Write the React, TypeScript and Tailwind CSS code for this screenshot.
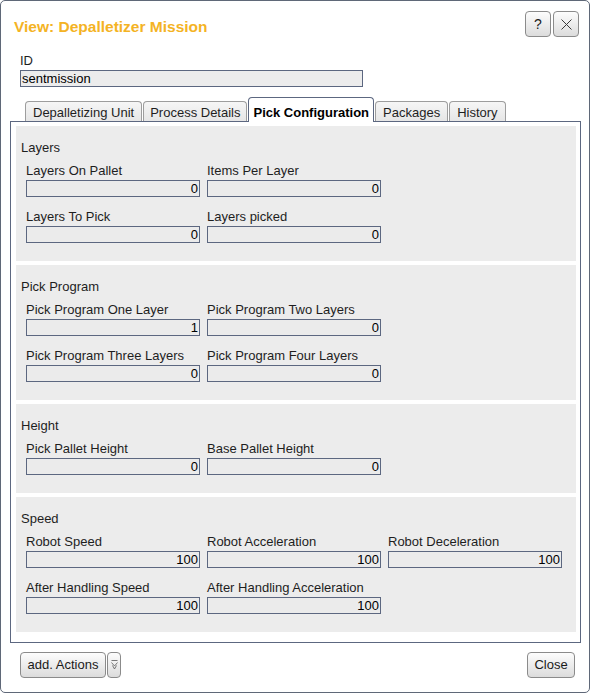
import React from 'react';

type Field = { label: string; value: string };
type Section = { title: string; rows: Field[][] };

const sections: Section[] = [
  {
    title: 'Layers',
    rows: [
      [
        { label: 'Layers On Pallet', value: '0' },
        { label: 'Items Per Layer', value: '0' },
      ],
      [
        { label: 'Layers To Pick', value: '0' },
        { label: 'Layers picked', value: '0' },
      ],
    ],
  },
  {
    title: 'Pick Program',
    rows: [
      [
        { label: 'Pick Program One Layer', value: '1' },
        { label: 'Pick Program Two Layers', value: '0' },
      ],
      [
        { label: 'Pick Program Three Layers', value: '0' },
        { label: 'Pick Program Four Layers', value: '0' },
      ],
    ],
  },
  {
    title: 'Height',
    rows: [
      [
        { label: 'Pick Pallet Height', value: '0' },
        { label: 'Base Pallet Height', value: '0' },
      ],
    ],
  },
  {
    title: 'Speed',
    rows: [
      [
        { label: 'Robot Speed', value: '100' },
        { label: 'Robot Acceleration', value: '100' },
        { label: 'Robot Deceleration', value: '100' },
      ],
      [
        { label: 'After Handling Speed', value: '100' },
        { label: 'After Handling Acceleration', value: '100' },
      ],
    ],
  },
];

const tabs = [
  { name: 'Depalletizing Unit', pad: 'px-[7px]' },
  { name: 'Process Details', pad: 'px-[6px]' },
  { name: 'Pick Configuration', pad: 'px-[4px]' },
  { name: 'Packages', pad: 'px-[7px]' },
  { name: 'History', pad: 'px-[7px]' },
];
const activeTab = 'Pick Configuration';

const btn =
  'border border-[#8b8b8b] rounded-[4px] bg-gradient-to-b from-[#fdfdfd] to-[#dcdcdc] text-[#1a1a1a] flex items-center justify-center';

function FieldBox({ label, value }: Field) {
  return (
    <div className="flex flex-col">
      <div className="leading-[16px] text-[#1e1e1e] whitespace-nowrap">{label}</div>
      <div className="mt-[1px] h-[17px] border border-[#5c6780] bg-[#ebebeb] text-right pr-[1px] leading-[15px] text-black">
        {value}
      </div>
    </div>
  );
}

export default function App() {
  return (
    <div className="w-[590px] h-[693px] bg-white text-[13px]" style={{ fontFamily: '"Liberation Sans", Arial, sans-serif' }}>
      <div className="h-full border border-[#5f6878] rounded-[5px] flex flex-col">
        {/* header */}
        <div className="flex items-start justify-between pl-[13px] pr-[10px] pt-[10px]">
          <div className="mt-[7px] leading-[18px] text-[15.5px] font-bold text-[#f4b324]">View: Depalletizer Mission</div>
          <div className="flex gap-[2px]">
            <button className={`${btn} w-[26px] h-[26px] text-[14px]`}>?</button>
            <button className={`${btn} w-[26px] h-[26px]`}>
              <svg width="11" height="11" viewBox="0 0 11 11">
                <path d="M0.5 0.5 L10.5 10.5 M10.5 0.5 L0.5 10.5" stroke="#3a3a3a" strokeWidth="1" fill="none" />
              </svg>
            </button>
          </div>
        </div>

        {/* id */}
        <div className="pl-[19px] mt-[16px]">
          <div className="leading-[16px] text-[#1e1e1e]">ID</div>
          <div className="mt-[1px] w-[343px] h-[17px] border border-[#5c6780] bg-[#ececec] pl-[1px] leading-[15px] text-black">
            sentmission
          </div>
        </div>

        {/* tabs */}
        <div className="relative z-10 flex items-end gap-[1px] pl-[24px] mt-[10px] -mb-[1px]">
          {tabs.map((t) =>
            t.name === activeTab ? (
              <div
                key={t.name}
                className={`h-[25px] ${t.pad} pt-[7px] pb-[1px] leading-[16px] border border-b-0 border-[#5c6780] rounded-t-[4px] bg-white font-bold text-black`}
              >
                {t.name}
              </div>
            ) : (
              <div
                key={t.name}
                className={`mb-[1px] h-[20px] ${t.pad} pt-[3px] leading-[16px] border border-b-0 border-[#9d9d9d] rounded-t-[4px] bg-gradient-to-b from-[#f6f6f6] to-[#e6e6e6] text-[#1e1e1e]`}
              >
                {t.name}
              </div>
            )
          )}
        </div>

        {/* panel */}
        <div className="ml-[9px] mr-[8px] border border-[#5c6780] pt-[4px] pb-[10px] pl-[5px] pr-[4px] flex flex-col gap-[4px]">
          {sections.map((s) => (
            <div key={s.title} className="bg-[#ececec] pt-[14px] pb-[18px] pl-[5px]">
              <div className="leading-[16px] text-[#1e1e1e]">{s.title}</div>
              <div className="mt-[7px] ml-[5px] flex flex-col gap-[12px]">
                {s.rows.map((row, i) => (
                  <div key={i} className="grid grid-cols-[174px_174px_174px] gap-x-[7px]">
                    {row.map((f) => (
                      <FieldBox key={f.label} {...f} />
                    ))}
                  </div>
                ))}
              </div>
            </div>
          ))}
        </div>

        {/* footer */}
        <div className="mt-[9px] flex items-center justify-between pl-[19px] pr-[14px]">
          <div className="flex gap-[1px]">
            <button className={`${btn} w-[86px] h-[26px]`}>add. Actions</button>
            <button className={`${btn} w-[14px] h-[26px]`}>
              <svg width="7" height="10" viewBox="0 0 7 10">
                <path d="M0.5 0.5 H6.5 M0.5 2.5 L3.5 6 L6.5 2.5 M1.5 5.5 L3.5 9 L5.5 5.5" stroke="#6a6a6a" strokeWidth="0.9" fill="none" />
              </svg>
            </button>
          </div>
          <button className={`${btn} w-[48px] h-[26px]`}>Close</button>
        </div>
      </div>
    </div>
  );
}
